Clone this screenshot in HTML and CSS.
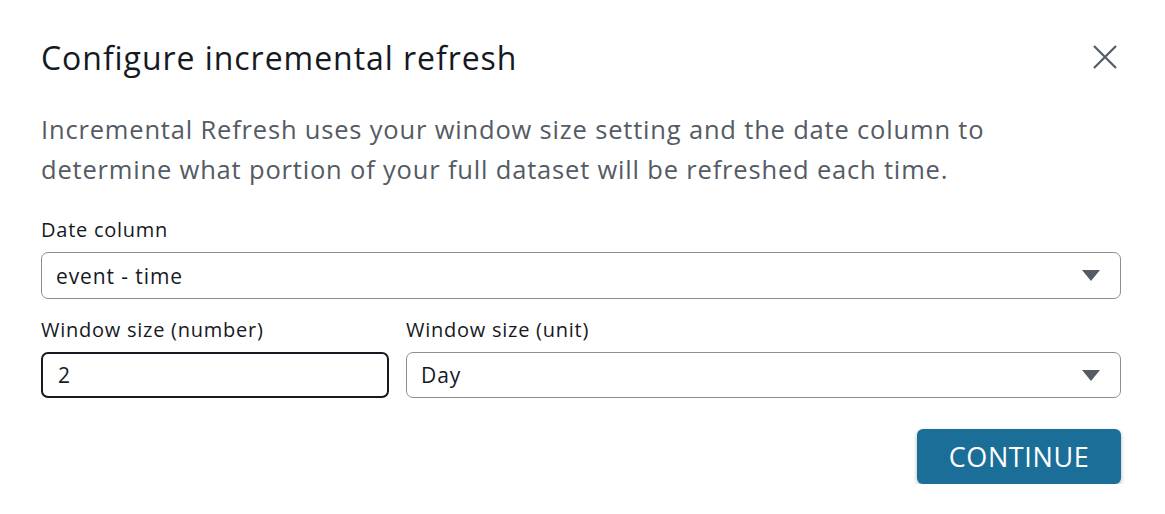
FILE: index.html
```html
<!DOCTYPE html>
<html>
<head>
<meta charset="utf-8">
<link rel="stylesheet" href="styles.css">
</head>
<body>
<div class="dialog">
  <div class="header">
    <h1 class="title">Configure incremental refresh</h1>
    <button class="close" aria-label="Close">
      <svg width="24" height="24" viewBox="0 0 24 24"><path d="M1 1 L23 23 M23 1 L1 23" stroke="#545b64" stroke-width="2.2" fill="none"/></svg>
    </button>
  </div>
  <p class="desc">Incremental Refresh uses your window size setting and the date column to determine what portion of your full dataset will be refreshed each time.</p>
  <div class="field">
    <label class="label">Date column</label>
    <div class="select"><span>event - time</span><span class="caret"></span></div>
  </div>
  <div class="row">
    <div class="field num">
      <label class="label">Window size (number)</label>
      <div class="input"><span>2</span></div>
    </div>
    <div class="field unit">
      <label class="label">Window size (unit)</label>
      <div class="select"><span>Day</span><span class="caret"></span></div>
    </div>
  </div>
  <div class="footer">
    <button class="btn">CONTINUE</button>
  </div>
</div>
</body>
</html>
```
FILE: styles.css
```css
html, body { margin: 0; padding: 0; background: #fff; }
body { font-family: "Open Sans", "Noto Sans", sans-serif; color: #16191f; }
.dialog { width: 1080px; padding: 36px 0 0 41px; }
.header { display: flex; justify-content: space-between; align-items: center; height: 42px; }
.title { margin: 0; font-size: 32px; font-weight: 400; color: #16191f; letter-spacing: 0.95px; }
.close { border: 0; background: none; padding: 0; margin-right: 4px; width: 24px; height: 24px; display: flex; }
.desc { margin: 31px 0 0; font-size: 25.5px; line-height: 40px; color: #545b64; letter-spacing: 0.82px; width: 1000px; }
.field { display: flex; flex-direction: column; }
.label { font-size: 20px; line-height: 26px; letter-spacing: 0.75px; margin-top: 28px; margin-bottom: 9px; }
.select, .input { box-sizing: border-box; height: 47px; border: 1.5px solid #8b8f94; border-radius: 7px; display: flex; align-items: center; justify-content: space-between; padding: 0 20px 0 14px; font-size: 21px; letter-spacing: 0.9px; }
.caret { width: 0; height: 0; border-left: 9px solid transparent; border-right: 9px solid transparent; border-top: 11px solid #545b64; }
.row { display: flex; gap: 17px; margin-top: -10px; }
.num { width: 348px; }
.unit { flex: 1; }
.row .select, .row .input { height: 46px; }
.input { border: 2px solid #16191f; padding-left: 15px; }
.footer { display: flex; justify-content: flex-end; margin-top: 31px; }
.btn { width: 204px; height: 55px; background: #1a6e97; color: #fff; border: 0; border-radius: 6px; font-family: "Open Sans", sans-serif; font-size: 27px; letter-spacing: 0.6px; box-shadow: 0 2px 4px rgba(0,0,0,0.3); }
```
